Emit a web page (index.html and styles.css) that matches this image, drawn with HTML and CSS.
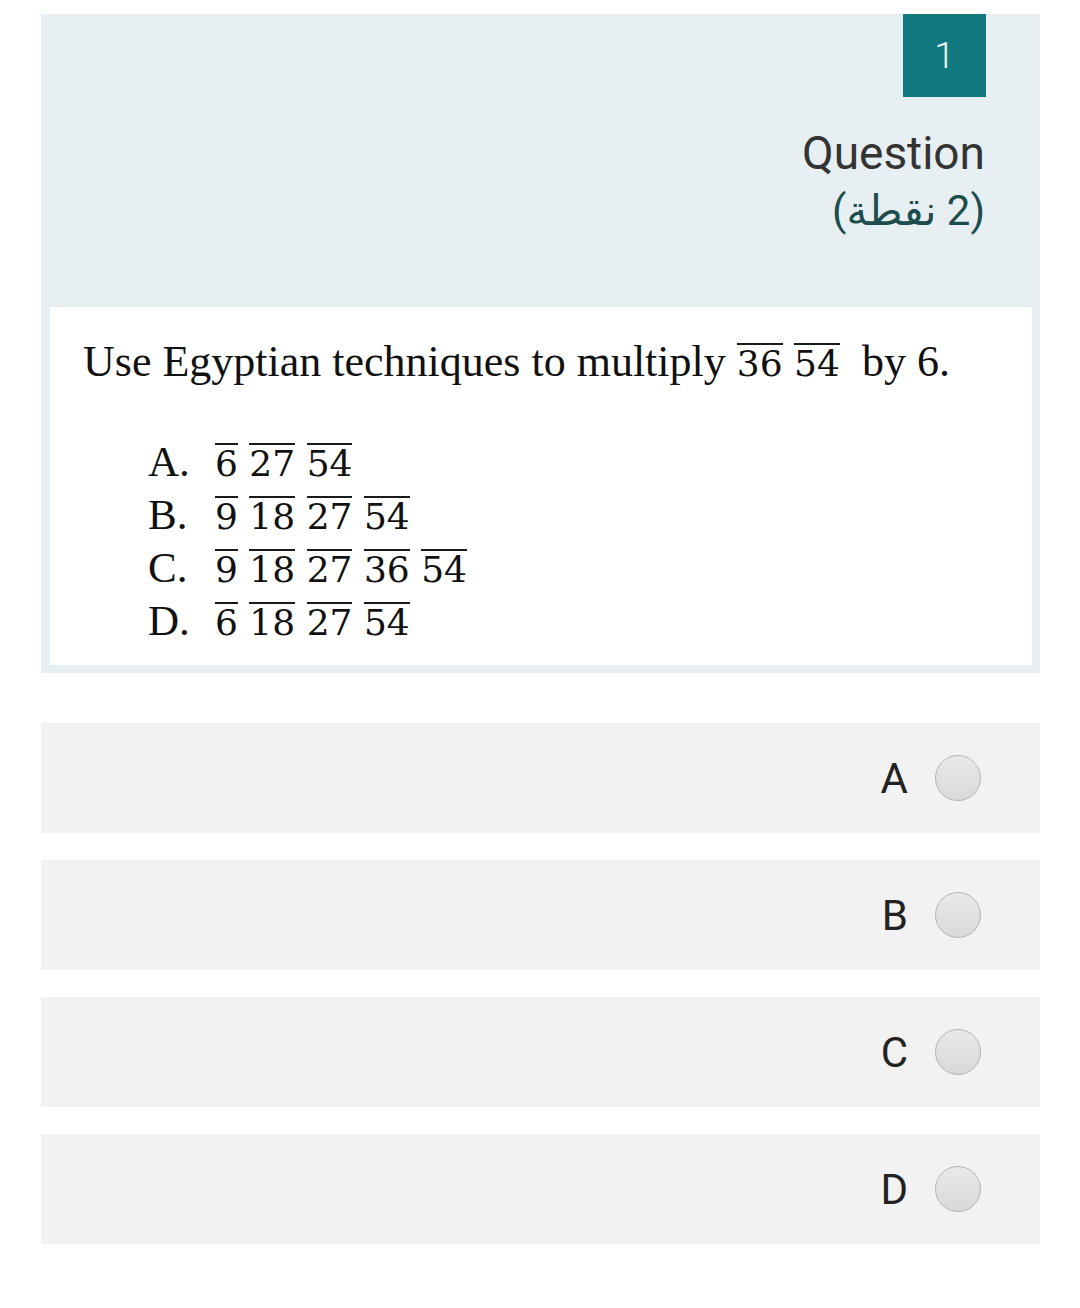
FILE: index.html
```html
<!DOCTYPE html>
<html lang="en">
<head>
<meta charset="utf-8">
<link rel="stylesheet" href="styles.css">
</head>
<body>
<div class="page">
  <section class="question-card">
    <div class="q-head">
      <div class="q-num">1</div>
      <div class="q-title">Question</div>
      <div class="q-points" dir="rtl">(2 نقطة)</div>
    </div>
    <div class="q-image">
      <p class="q-text">Use Egyptian techniques to multiply <span class="num"><span class="ov">36</span> <span class="ov">54</span></span>&nbsp; by 6.</p>
      <div class="opts">
        <div class="opt"><span class="lbl">A.</span><span class="num"><span class="ov">6</span> <span class="ov">27</span> <span class="ov">54</span></span></div>
        <div class="opt"><span class="lbl">B.</span><span class="num"><span class="ov">9</span> <span class="ov">18</span> <span class="ov">27</span> <span class="ov">54</span></span></div>
        <div class="opt"><span class="lbl">C.</span><span class="num"><span class="ov">9</span> <span class="ov">18</span> <span class="ov">27</span> <span class="ov">36</span> <span class="ov">54</span></span></div>
        <div class="opt"><span class="lbl">D.</span><span class="num"><span class="ov">6</span> <span class="ov">18</span> <span class="ov">27</span> <span class="ov">54</span></span></div>
      </div>
    </div>
  </section>
  <div class="answers">
    <label class="answer"><span class="a-lbl">A</span><span class="radio"></span></label>
    <label class="answer"><span class="a-lbl">B</span><span class="radio"></span></label>
    <label class="answer"><span class="a-lbl">C</span><span class="radio"></span></label>
    <label class="answer"><span class="a-lbl">D</span><span class="radio"></span></label>
  </div>
</div>
</body>
</html>
```
FILE: styles.css
```css
html, body {
  margin: 0;
  padding: 0;
  background: #ffffff;
}
.page {
  width: 999px;
  margin-left: 41px;
  padding-top: 14px;
  font-family: Roboto, "DejaVu Sans", sans-serif;
}
.question-card {
  background: #e7eff2;
  padding: 0 8px 8px 9px;
}
.q-head {
  height: 293px;
  display: flex;
  flex-direction: column;
  align-items: flex-end;
  padding-right: 47px;
  box-sizing: border-box;
}
.q-num {
  width: 83px;
  height: 83px;
  margin-right: -1px;
  background: #12797e;
  color: #e9f6f6;
  font-size: 37px;
  font-weight: 300;
  display: flex;
  align-items: center;
  justify-content: center;
}
.q-title {
  margin-top: 28px;
  font-size: 46px;
  line-height: 56px;
  color: #333333;
}
.q-points {
  font-size: 42px;
  line-height: 60px;
  color: #1d4c4e;
  font-family: Roboto, "DejaVu Sans", sans-serif;
}
.q-image {
  background: #ffffff;
  height: 358px;
  box-sizing: border-box;
  padding: 28px 0 0 33px;
  font-family: "Liberation Serif", serif;
  color: #111111;
}
.q-text {
  margin: 0;
  font-size: 44px;
  line-height: 54px;
}
.num {
  font-family: "DejaVu Serif", serif;
  font-size: 36px;
}
.ov {
  display: inline-block;
  border-top: 2px solid #1a1a1a;
  line-height: 38px;
}
.opts {
  margin-top: 46px;
  padding-left: 65px;
}
.opt {
  display: flex;
  align-items: baseline;
  height: 53px;
  font-size: 43px;
}
.lbl {
  width: 67px;
}
.answers {
  margin-top: 50px;
  display: flex;
  flex-direction: column;
  gap: 27px;
}
.answer {
  height: 110px;
  background: #f2f2f2;
  display: flex;
  align-items: center;
  justify-content: flex-end;
  padding-right: 59px;
  gap: 27px;
}
.a-lbl {
  font-size: 42px;
  color: #222222;
}
.radio {
  width: 44px;
  height: 44px;
  border-radius: 50%;
  border: 1px solid #b3b3b3;
  background: linear-gradient(#e9e9e9, #d9d9d9);
}
```
